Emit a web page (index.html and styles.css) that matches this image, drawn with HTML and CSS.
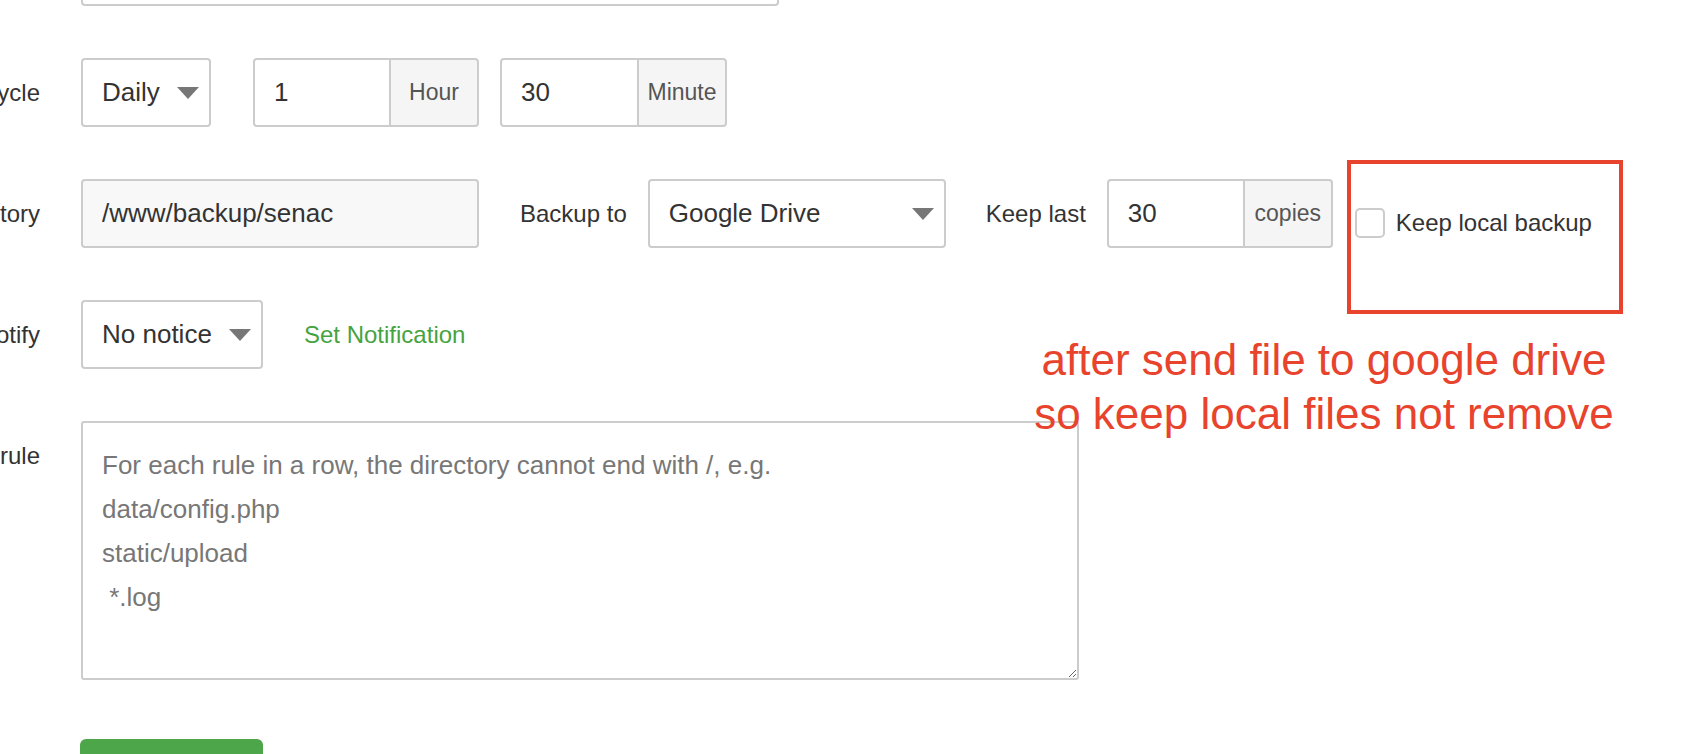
FILE: index.html
```html
<!DOCTYPE html>
<html lang="en">
<head>
  <meta charset="UTF-8">
  <meta name="viewport" content="width=device-width, initial-scale=1.0">
  <title>Add backup task</title>
  <link rel="stylesheet" href="styles.css">
</head>
<body>
  <div class="form">
    <div class="form-row">
      <label class="form-label">Task name</label>
      <input class="input input-name" type="text">
    </div>

    <div class="form-row">
      <label class="form-label">Execution cycle</label>
      <div class="select select-cycle"><span>Daily</span><i class="caret"></i></div>
      <div class="input-group group-hour">
        <input class="input" type="text" value="1">
        <span class="addon">Hour</span>
      </div>
      <div class="input-group group-minute">
        <input class="input" type="text" value="30">
        <span class="addon">Minute</span>
      </div>
    </div>

    <div class="form-row">
      <label class="form-label">Backup directory</label>
      <input class="input input-path" type="text" value="/www/backup/senac" readonly>
      <span class="inline-label label-backup">Backup to</span>
      <div class="select select-drive"><span>Google Drive</span><i class="caret"></i></div>
      <span class="inline-label label-keep">Keep last</span>
      <div class="input-group group-copies">
        <input class="input" type="text" value="30">
        <span class="addon">copies</span>
      </div>
      <label class="check">
        <span class="check-box"></span>
        Keep local backup
      </label>
    </div>

    <div class="form-row">
      <label class="form-label">Notify</label>
      <div class="select select-notice"><span>No notice</span><i class="caret"></i></div>
      <a class="link" href="#">Set Notification</a>
    </div>

    <div class="form-row form-row-top">
      <label class="form-label form-label-top">Exclusion rule</label>
      <textarea class="rules" placeholder="For each rule in a row, the directory cannot end with /, e.g.&#10;data/config.php&#10;static/upload&#10; *.log"></textarea>
    </div>

    <div class="form-row form-actions">
      <span class="form-label"></span>
      <button class="btn">Submit</button>
    </div>
  </div>

  <!-- annotation drawn over the screenshot -->
  <div class="note-box"></div>
  <div class="note-text">after send file to google drive<br>so keep local files not remove</div>
</body>
</html>
```

FILE: styles.css
```css
body {
  margin: 0;
  font-family: "Liberation Sans", Arial, sans-serif;
  color: #333;
  background-color: #ffffff;
  overflow: hidden;
  height: 754px;
  position: relative;
}

.form {
  display: flex;
  flex-direction: column;
  gap: 52px;
  margin-top: -63px;
  margin-left: -319px;
}

.form-row {
  display: flex;
  align-items: center;
}

.form-row-top {
  align-items: flex-start;
}

.form-label {
  width: 400px;
  flex-shrink: 0;
  box-sizing: border-box;
  padding-right: 41px;
  text-align: right;
  white-space: nowrap;
  font-size: 24px;
  color: #333;
}

.form-label-top {
  line-height: 69px;
}

.input {
  box-sizing: border-box;
  height: 69px;
  border: 2px solid #ccc;
  border-radius: 4px;
  padding: 0 19px;
  font-family: inherit;
  font-size: 26px;
  color: #333;
  background-color: #fff;
  outline: none;
}

.input-name {
  width: 698px;
}

.input-path {
  width: 398px;
  background-color: #f8f8f8;
}

.input-group {
  display: flex;
  height: 69px;
}

.input-group .input {
  width: 138px;
  border-radius: 4px 0 0 4px;
}

.addon {
  box-sizing: border-box;
  width: 88px;
  display: flex;
  align-items: center;
  justify-content: center;
  border: 2px solid #ccc;
  border-left: none;
  border-radius: 0 4px 4px 0;
  background-color: #f5f5f5;
  color: #555;
  font-size: 23px;
}

.group-hour {
  margin-left: 42px;
}

.group-minute {
  margin-left: 21px;
}

.group-minute .input {
  width: 139px;
}

.group-copies {
  margin-left: 21px;
}

.select {
  box-sizing: border-box;
  height: 69px;
  display: flex;
  align-items: center;
  border: 2px solid #ccc;
  border-radius: 4px;
  padding: 0 10px 0 19px;
  font-size: 26px;
  color: #333;
  background-color: #fff;
}

.caret {
  margin-left: auto;
  width: 0;
  height: 0;
  border-left: 11px solid transparent;
  border-right: 11px solid transparent;
  border-top: 12px solid #777;
}

.select-cycle {
  width: 130px;
}

.select-drive {
  width: 298px;
}

.select-notice {
  width: 182px;
}

.inline-label {
  font-size: 24px;
  color: #333;
  white-space: nowrap;
}

.label-backup {
  margin-left: 41px;
  margin-right: 21px;
}

.label-keep {
  margin-left: 40px;
}

.check {
  display: flex;
  align-items: center;
  align-self: flex-start;
  margin-top: 29px;
  margin-left: 22px;
  font-size: 24px;
  color: #333;
  white-space: nowrap;
}

.check-box {
  box-sizing: border-box;
  width: 30px;
  height: 30px;
  border: 2px solid #ccc;
  border-radius: 5px;
  margin-right: 11px;
  background-color: #fff;
}

.link {
  margin-left: 41px;
  font-size: 24px;
  color: #45a340;
  text-decoration: none;
}

.rules {
  box-sizing: border-box;
  width: 998px;
  height: 259px;
  border: 2px solid #ccc;
  border-radius: 3px;
  padding: 20px 19px;
  font-family: inherit;
  font-size: 26px;
  line-height: 44px;
  color: #333;
  outline: none;
}

.rules::placeholder {
  color: #777;
}

.form-actions {
  margin-top: 7px;
}

.btn {
  width: 183px;
  height: 64px;
  margin-left: -1px;
  border: none;
  border-radius: 6px;
  background-color: #4ea64a;
  color: #fff;
  font-family: inherit;
  font-size: 24px;
}

.note-box {
  position: absolute;
  left: 1347px;
  top: 160px;
  width: 276px;
  height: 154px;
  box-sizing: border-box;
  border: 4px solid #e8432c;
}

.note-text {
  position: absolute;
  left: 974px;
  top: 333px;
  width: 700px;
  text-align: center;
  font-size: 44px;
  line-height: 54px;
  color: #e8432c;
}
```
